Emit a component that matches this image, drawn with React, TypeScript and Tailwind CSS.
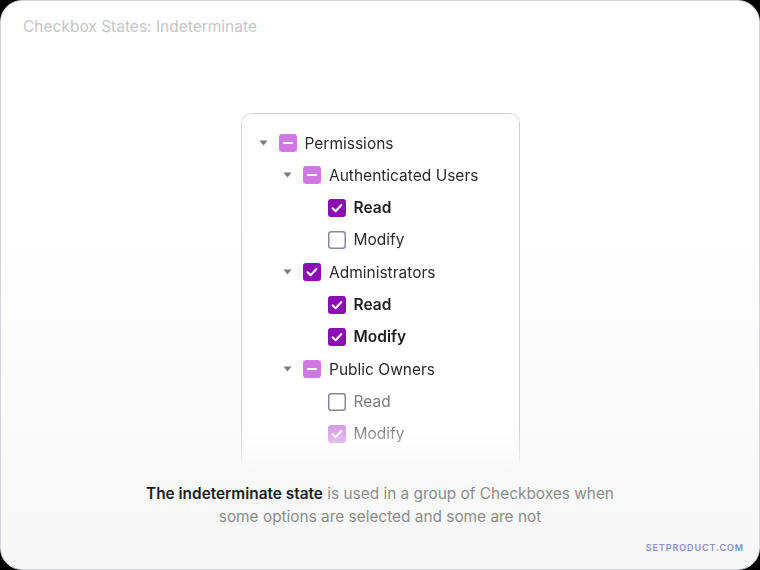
import React from 'react';

type State = 'checked' | 'unchecked' | 'indeterminate' | 'disabledChecked';

interface Row {
  label: string;
  level: number;
  state: State;
  caret?: boolean;
  bold?: boolean;
  muted?: boolean;
}

const rows: Row[] = [
  { label: 'Permissions', level: 0, state: 'indeterminate', caret: true },
  { label: 'Authenticated Users', level: 1, state: 'indeterminate', caret: true },
  { label: 'Read', level: 2, state: 'checked', bold: true },
  { label: 'Modify', level: 2, state: 'unchecked' },
  { label: 'Administrators', level: 1, state: 'checked', caret: true },
  { label: 'Read', level: 2, state: 'checked', bold: true },
  { label: 'Modify', level: 2, state: 'checked', bold: true },
  { label: 'Public Owners', level: 1, state: 'indeterminate', caret: true },
  { label: 'Read', level: 2, state: 'unchecked', muted: true },
  { label: 'Modify', level: 2, state: 'disabledChecked', muted: true },
];

function Box({ state }: { state: State }) {
  if (state === 'unchecked') {
    return (
      <svg width="18" height="18" viewBox="0 0 18 18">
        <rect x="0.75" y="0.75" width="16.5" height="16.5" rx="2.5" fill="white" stroke="#8e8296" strokeWidth="1.5" />
      </svg>
    );
  }
  const fill = state === 'checked' ? '#8a0eb3' : state === 'indeterminate' ? '#cf78e4' : '#d6a0e6';
  return (
    <svg width="18" height="18" viewBox="0 0 18 18">
      <rect x="0" y="0" width="18" height="18" rx="3" fill={fill} />
      {state === 'indeterminate' ? (
        <path d="M5 9h8" stroke="white" strokeWidth="2.2" strokeLinecap="round" />
      ) : (
        <path d="M4.6 9.2l3 3 5.8-6.2" stroke="white" strokeWidth="2" fill="none" strokeLinecap="round" strokeLinejoin="round" />
      )}
    </svg>
  );
}

function Caret() {
  return (
    <svg width="9" height="6" viewBox="0 0 9 6">
      <path d="M0.5 0.5h8L4.5 5.5z" fill="#7a7a7a" />
    </svg>
  );
}

export default function App() {
  return (
    <div className="bg-black w-[760px] h-[570px]" style={{ fontFamily: 'Inter, "Noto Sans", sans-serif' }}>
      <div className="relative flex flex-col items-center h-[570px] rounded-[22px] border border-gray-300 bg-gradient-to-b from-white from-40% to-[#f6f6f7] overflow-hidden">
        <div className="self-start pl-[22px] pt-[15px] h-[40px] text-[15.5px] leading-[22px] text-[#c6c6c6]">
          Checkbox States: Indeterminate
        </div>

        <div className="mt-[72px] w-[279px] h-[358px] rounded-[10px] border border-[#cfcfcf] bg-white pt-[13px] pl-[17px] [mask-image:linear-gradient(to_bottom,black_88%,transparent_100%)]">
          {rows.map((row, i) => (
            <div key={i} className="flex items-center h-[32.3px]" style={{ paddingLeft: row.level * 24.5 }}>
              <div className="w-[20px] flex items-center">{row.caret && <Caret />}</div>
              <Box state={row.state} />
              <span
                className={`ml-[8px] text-[15.5px] ${row.bold ? 'font-semibold text-[#1e1e1e]' : row.muted ? 'text-[#7c7c7c]' : 'text-[#2a2a2a]'}`}
              >
                {row.label}
              </span>
            </div>
          ))}
        </div>

        <p className="mt-[11px] w-[600px] text-center text-[15.4px] leading-[23px] text-[#8c8c8c]">
          <span className="font-semibold text-[#1e1e1e]">The indeterminate state</span> is used in a group of Checkboxes when
          <br />
          some options are selected and some are not
        </p>

        <div className="absolute right-[15px] bottom-[15px] text-[9px] font-semibold tracking-[0.1em] text-[#8c8fc2]">
          SETPRODUCT.COM
        </div>
      </div>
    </div>
  );
}
